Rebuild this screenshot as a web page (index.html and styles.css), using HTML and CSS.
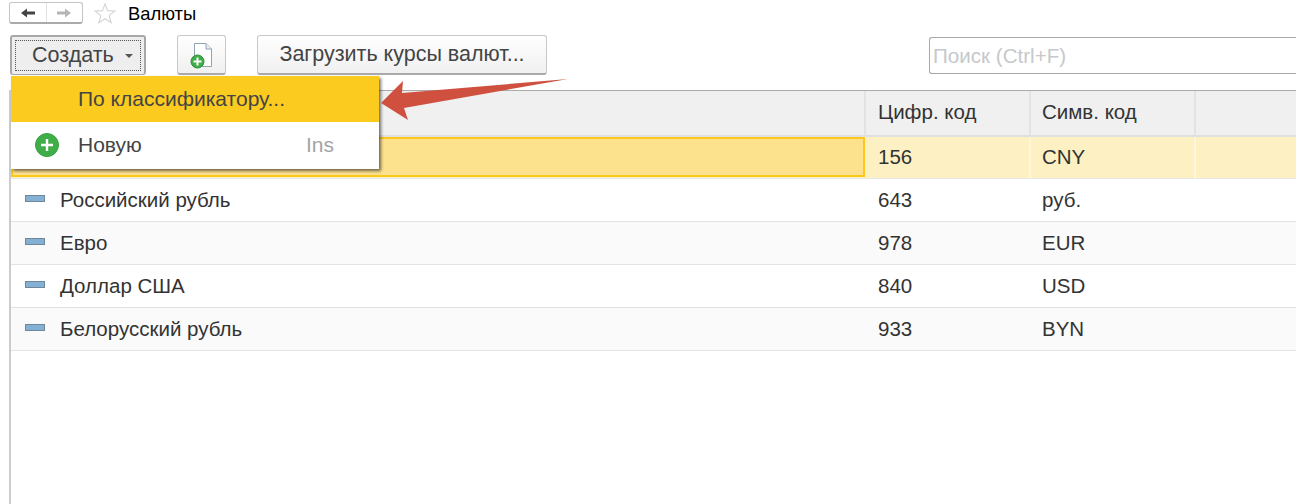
FILE: index.html
```html
<!DOCTYPE html>
<html lang="en">
<head>
  <meta charset="UTF-8">
  <title>Валюты</title>
  <link rel="stylesheet" href="styles.css">
</head>
<body>

<div class="title-bar">
  <div class="nav-buttons">
    <span class="nav-btn active">
      <svg width="16" height="10" viewBox="0 0 16 10"><path d="M1 5 L7 0.5 V3.5 H15 V6.5 H7 V9.5 Z" fill="#444"/></svg>
    </span>
    <span class="nav-btn">
      <svg width="16" height="10" viewBox="0 0 16 10"><path d="M15 5 L9 0.5 V3.5 H1 V6.5 H9 V9.5 Z" fill="#b5b5b5"/></svg>
    </span>
  </div>
  <svg class="star" width="22" height="21" viewBox="0 0 24 23"><path d="M12 1 L14.8 8.4 L22.8 8.8 L16.5 13.8 L18.8 21.6 L12 17.2 L5.2 21.6 L7.5 13.8 L1.2 8.8 L9.2 8.4 Z" fill="#fff" stroke="#d4d4d4" stroke-width="1.2"/></svg>
  <span class="page-title">Валюты</span>
</div>

<div class="toolbar">
  <button class="btn btn-create"><span class="focus-box">Создать <i class="caret"></i></span></button>
  <button class="btn btn-icon">
    <svg width="24" height="28" viewBox="0 0 24 28">
      <path d="M4.5 2.5 H16 L21.5 8 V25.5 H4.5 Z" fill="#fff" stroke="#8fa3b5"/>
      <path d="M16 2.5 V8 H21.5" fill="#e6edf3" stroke="#8fa3b5"/>
      <circle cx="7.5" cy="20.5" r="6.5" fill="#3fae49" stroke="#2d8f3a"/>
      <path d="M7.5 16.5 V24.5 M3.5 20.5 H11.5" stroke="#fff" stroke-width="2"/>
    </svg>
  </button>
  <button class="btn btn-load">Загрузить курсы валют...</button>
  <div class="search">Поиск (Ctrl+F)</div>
</div>

<div class="grid">
  <div class="row head">
    <div class="cell c-name"></div>
    <div class="cell c-num">Цифр. код</div>
    <div class="cell c-sym">Симв. код</div>
    <div class="cell c-rest"></div>
  </div>
  <div class="row selected">
    <div class="cell c-name"></div>
    <div class="cell c-num">156</div>
    <div class="cell c-sym">CNY</div>
    <div class="cell c-rest"></div>
  </div>
  <div class="row">
    <div class="cell c-name"><i class="dash"></i>Российский рубль</div>
    <div class="cell c-num">643</div>
    <div class="cell c-sym">руб.</div>
    <div class="cell c-rest"></div>
  </div>
  <div class="row alt">
    <div class="cell c-name"><i class="dash"></i>Евро</div>
    <div class="cell c-num">978</div>
    <div class="cell c-sym">EUR</div>
    <div class="cell c-rest"></div>
  </div>
  <div class="row">
    <div class="cell c-name"><i class="dash"></i>Доллар США</div>
    <div class="cell c-num">840</div>
    <div class="cell c-sym">USD</div>
    <div class="cell c-rest"></div>
  </div>
  <div class="row alt">
    <div class="cell c-name"><i class="dash"></i>Белорусский рубль</div>
    <div class="cell c-num">933</div>
    <div class="cell c-sym">BYN</div>
    <div class="cell c-rest"></div>
  </div>
</div>

<div class="menu">
  <div class="menu-item current"><span class="menu-icon"></span>По классификатору...</div>
  <div class="menu-item">
    <span class="menu-icon">
      <svg width="24" height="24" viewBox="0 0 24 24">
        <circle cx="12" cy="12" r="11.5" fill="#3fae49" stroke="#37a044"/>
        <path d="M12 6 V18 M6 12 H18" stroke="#fff" stroke-width="2.4"/>
      </svg>
    </span>
    Новую
    <span class="shortcut">Ins</span>
  </div>
</div>

<svg class="arrow" width="190" height="48" viewBox="0 0 190 48">
  <path d="M1 27 L23 5 L22 17 L188 3 L24 32 L28 44 Z" fill="#d05040"/>
</svg>

</body>
</html>
```

FILE: styles.css
```css
body {
  font-family: 'Liberation Sans', sans-serif;
  margin: 0;
  padding: 0;
  background: #fff;
  color: #333;
  height: 504px;
  overflow: hidden;
  position: relative;
}
.title-bar {
  display: flex;
  align-items: center;
  height: 28px;
  padding-left: 9px;
}
.nav-buttons {
  display: flex;
  width: 74px;
  height: 22px;
  box-sizing: border-box;
  border: 1px solid #c4c4c4;
  border-bottom: 2px solid #aaa;
  border-radius: 3px;
  margin-top: -2px;
}
.nav-btn {
  flex: 1;
  display: flex;
  align-items: center;
  justify-content: center;
}
.nav-btn.active {
  border-right: 1px solid #e2e2e2;
}
.star {
  margin-left: 11px;
  margin-top: -2px;
}
.page-title {
  margin-left: 12px;
  font-size: 18.4px;
  color: #000;
}
.toolbar {
  display: flex;
  align-items: flex-start;
  height: 62px;
  padding-left: 10px;
  padding-top: 7px;
  box-sizing: border-box;
}
.btn {
  font-family: inherit;
  font-size: 21.5px;
  color: #444;
  height: 40px;
  box-sizing: border-box;
  border: 1px solid #c8c8c8;
  border-bottom: 2px solid #aaa;
  border-radius: 3px;
  background: linear-gradient(#fff, #f0f0f0);
  padding: 0;
}
.btn-create {
  width: 136px;
  padding: 3px;
  border-color: #a8a8a8;
  border-width: 2px 2px 1px 2px;
  background: #eee;
}
.focus-box {
  display: flex;
  align-items: center;
  height: 100%;
  gap: 11px;
  padding-left: 16px;
  border: 1px dotted #555;
  box-sizing: border-box;
}
.caret {
  width: 0;
  height: 0;
  border: 4px solid transparent;
  border-top: 4px solid #555;
  margin-top: 5px;
}
.btn-icon {
  width: 49px;
  margin-left: 31px;
  display: flex;
  align-items: center;
  justify-content: center;
}
.btn-load {
  width: 290px;
  margin-left: 31px;
}
.search {
  width: 367px;
  height: 37px;
  margin-top: 2px;
  margin-left: auto;
  box-sizing: border-box;
  border: 1px solid #a8a8a8;
  border-right: none;
  border-radius: 3px 0 0 3px;
  color: #c6c9cc;
  font-size: 20.6px;
  line-height: 35px;
  padding-left: 3px;
}
.grid {
  margin-left: 9px;
  border-left: 2px solid #ccc;
  height: 414px;
}
.row {
  display: flex;
  height: 43px;
  box-sizing: border-box;
  border-bottom: 1px solid #e3e3e3;
  font-size: 20.5px;
}
.row.alt {
  background: #fafafa;
}
.row.head {
  height: 47px;
  background: #f0f0f0;
  border-top: 1px solid #aaa;
  border-bottom: 2px solid #e0e0e0;
}
.row.head .cell {
  border-right: 2px solid #e3e3e3;
  padding-bottom: 2px;
}
.row.selected {
  height: 42px;
  background: #fdf1c4;
  border-bottom: 1px solid #e8e8e8;
}
.row.selected .cell {
  border-right: 2px solid #fef7dc;
  padding-bottom: 2px;
}
.row.selected .c-name {
  width: 854px;
  height: 40px;
  margin-right: 1px;
  background: #fde28e;
  border: 2px solid #fcc81e;
}
.cell {
  display: flex;
  align-items: center;
  box-sizing: border-box;
}
.c-name {
  width: 855px;
  padding-left: 14px;
}
.c-num {
  width: 165px;
  padding-left: 12px;
}
.c-sym {
  width: 165px;
  padding-left: 11px;
}
.c-rest {
  flex: 1;
  border-right: none !important;
}
.dash {
  width: 20px;
  height: 7px;
  box-sizing: border-box;
  background: #85b0d5;
  border: 1px solid #6f8798;
  margin-right: 15px;
  margin-top: -3px;
}
.menu {
  position: absolute;
  left: 11px;
  top: 76px;
  width: 368px;
  height: 93px;
  background: #fff;
  box-shadow: 2px 2px 3px rgba(0, 0, 0, 0.55);
  font-size: 21px;
  color: #444;
}
.menu-item {
  display: flex;
  align-items: center;
  height: 45px;
}
.menu-item.current {
  height: 46px;
  background: #fccb1f;
}
.menu-icon {
  display: flex;
  width: 43px;
  padding-left: 24px;
}
.shortcut {
  margin-left: auto;
  margin-right: 45px;
  color: #a4a4a4;
}
.arrow {
  position: absolute;
  left: 380px;
  top: 76px;
}
```
